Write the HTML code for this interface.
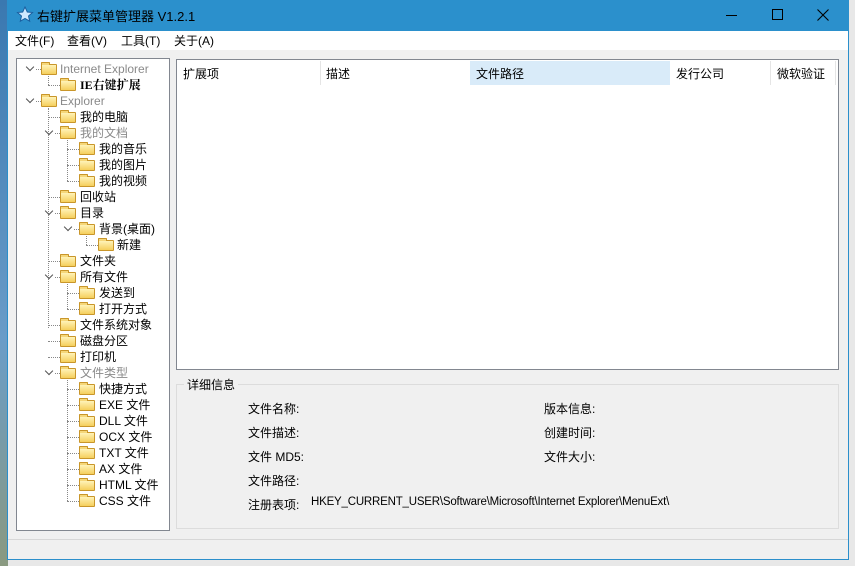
<!DOCTYPE html>
<html><head><meta charset="utf-8"><style>
*{margin:0;padding:0;box-sizing:border-box}
body{width:855px;height:566px;overflow:hidden;background:#e8e8e8;font-family:"Liberation Sans","Noto Sans CJK SC",sans-serif;font-size:12px;color:#000;position:relative}
.a{position:absolute;white-space:nowrap}
.desk{left:0;top:0;width:8px;height:566px;background:linear-gradient(#3a78b0,#6a9cc8 60%,#8a9a80)}
.win{left:7px;top:0;width:842px;height:560px;background:#f0f0f0;border:1px solid #2b8fcb;border-top:0}
.title{left:7px;top:0;width:842px;height:31px;background:#2b90cc;color:#000;font-size:13px}
.menu{left:8px;top:31px;width:840px;height:19px;background:#fff}
.box{background:#fff;border:1px solid #828790}
.f{position:absolute;width:16px;height:11px;margin-top:1px;background:linear-gradient(#fff3b8,#f5cf5c);border:1px solid #c9962a;border-radius:1px}
.f:before{content:"";position:absolute;left:-1px;top:-3px;width:7px;height:2px;background:#f5d77a;border:1px solid #c9962a;border-bottom:0;border-radius:1px 1px 0 0}
.t{position:absolute;font-size:12px;line-height:16px}
.g{color:#8a8a8a}
.ch{position:absolute;width:6px;height:6px;border-right:1.5px solid #555;border-bottom:1.5px solid #555;transform:rotate(45deg)}
.d{position:absolute;border-top:1px dotted #888;height:0}
.v{position:absolute;border-left:1px dotted #888;width:0}
.hd{position:absolute;top:62px;height:25px;line-height:25px;font-size:12px}
.lb{position:absolute;font-size:12px}
</style></head><body>
<div class="a desk"></div>
<div class="a win"></div>
<div class="a title">
 <svg class="a" style="left:9px;top:6px" width="18" height="18" viewBox="0 0 18 18"><path d="M9 1l2.3 5 5.2.5-4 3.5 1.2 5.2L9 12.5 4.3 15.2 5.5 10l-4-3.5 5.2-.5z" fill="#cfe8ff" stroke="#1a5fa0" stroke-width="1"/></svg>
 <span class="a" style="left:30px;top:6px">右键扩展菜单管理器 V1.2.1</span>
 <div class="a" style="left:719px;top:15px;width:11px;border-top:1px solid #000"></div>
 <div class="a" style="left:765px;top:9px;width:11px;height:11px;border:1px solid #000"></div>
 <svg class="a" style="left:810px;top:9px" width="12" height="12"><path d="M0.5 0.5L11.5 11.5M11.5 0.5L0.5 11.5" stroke="#000" stroke-width="1.1"/></svg>
</div>
<div class="a menu"><span class="a" style="left:7px;top:1px">文件(F)</span><span class="a" style="left:59px;top:1px">查看(V)</span><span class="a" style="left:113px;top:1px">工具(T)</span><span class="a" style="left:166px;top:1px">关于(A)</span></div>

<div class="a box" style="left:16px;top:58px;width:154px;height:473px">
<div style="position:relative;left:-17px;top:-59px">
 <div class="ch" style="left:27px;top:64px"></div><div class="d" style="left:36px;top:69px;width:5px"></div><div class="f" style="left:41px;top:63px"></div><div class="t g" style="left:60px;top:61px">Internet Explorer</div>
 <div class="v" style="left:48px;top:76px;height:9px"></div><div class="d" style="left:48px;top:85px;width:12px"></div><div class="f" style="left:60px;top:79px"></div><div class="t" style="left:80px;top:77px;font-weight:bold;font-family:'Liberation Serif','Noto Serif CJK SC',serif">IE右键扩展</div>
 <div class="ch" style="left:27px;top:96px"></div><div class="d" style="left:36px;top:101px;width:5px"></div><div class="f" style="left:41px;top:95px"></div><div class="t g" style="left:60px;top:93px">Explorer</div>
 <div class="v" style="left:48px;top:108px;height:220px"></div>
 <div class="d" style="left:48px;top:117px;width:12px"></div><div class="f" style="left:60px;top:111px"></div><div class="t" style="left:80px;top:109px">我的电脑</div>
 <div class="ch" style="left:46px;top:128px"></div><div class="d" style="left:55px;top:133px;width:5px"></div><div class="f" style="left:60px;top:127px"></div><div class="t g" style="left:80px;top:125px">我的文档</div>
 <div class="v" style="left:67px;top:140px;height:41px"></div>
 <div class="d" style="left:67px;top:149px;width:12px"></div><div class="f" style="left:79px;top:143px"></div><div class="t" style="left:99px;top:141px">我的音乐</div>
 <div class="d" style="left:67px;top:165px;width:12px"></div><div class="f" style="left:79px;top:159px"></div><div class="t" style="left:99px;top:157px">我的图片</div>
 <div class="d" style="left:67px;top:181px;width:12px"></div><div class="f" style="left:79px;top:175px"></div><div class="t" style="left:99px;top:173px">我的视频</div>
 <div class="d" style="left:48px;top:197px;width:12px"></div><div class="f" style="left:60px;top:191px"></div><div class="t" style="left:80px;top:189px">回收站</div>
 <div class="ch" style="left:46px;top:208px"></div><div class="d" style="left:55px;top:213px;width:5px"></div><div class="f" style="left:60px;top:207px"></div><div class="t" style="left:80px;top:205px">目录</div>
 <div class="ch" style="left:65px;top:224px"></div><div class="d" style="left:74px;top:229px;width:5px"></div><div class="f" style="left:79px;top:223px"></div><div class="t" style="left:99px;top:221px">背景(桌面)</div>
 <div class="v" style="left:86px;top:236px;height:9px"></div><div class="d" style="left:86px;top:245px;width:12px"></div><div class="f" style="left:98px;top:239px"></div><div class="t" style="left:117px;top:237px">新建</div>
 <div class="d" style="left:48px;top:261px;width:12px"></div><div class="f" style="left:60px;top:255px"></div><div class="t" style="left:80px;top:253px">文件夹</div>
 <div class="ch" style="left:46px;top:272px"></div><div class="d" style="left:55px;top:277px;width:5px"></div><div class="f" style="left:60px;top:271px"></div><div class="t" style="left:80px;top:269px">所有文件</div>
 <div class="v" style="left:67px;top:284px;height:25px"></div>
 <div class="d" style="left:67px;top:293px;width:12px"></div><div class="f" style="left:79px;top:287px"></div><div class="t" style="left:99px;top:285px">发送到</div>
 <div class="d" style="left:67px;top:309px;width:12px"></div><div class="f" style="left:79px;top:303px"></div><div class="t" style="left:99px;top:301px">打开方式</div>
 <div class="d" style="left:48px;top:325px;width:12px"></div><div class="f" style="left:60px;top:319px"></div><div class="t" style="left:80px;top:317px">文件系统对象</div>
 <div class="d" style="left:48px;top:341px;width:12px"></div><div class="f" style="left:60px;top:335px"></div><div class="t" style="left:80px;top:333px">磁盘分区</div>
 <div class="d" style="left:48px;top:357px;width:12px"></div><div class="f" style="left:60px;top:351px"></div><div class="t" style="left:80px;top:349px">打印机</div>
 <div class="ch" style="left:46px;top:368px"></div><div class="d" style="left:55px;top:373px;width:5px"></div><div class="f" style="left:60px;top:367px"></div><div class="t g" style="left:80px;top:365px">文件类型</div>
 <div class="v" style="left:67px;top:380px;height:121px"></div>
 <div class="d" style="left:67px;top:389px;width:12px"></div><div class="f" style="left:79px;top:383px"></div><div class="t" style="left:99px;top:381px">快捷方式</div>
 <div class="d" style="left:67px;top:405px;width:12px"></div><div class="f" style="left:79px;top:399px"></div><div class="t" style="left:99px;top:397px">EXE 文件</div>
 <div class="d" style="left:67px;top:421px;width:12px"></div><div class="f" style="left:79px;top:415px"></div><div class="t" style="left:99px;top:413px">DLL 文件</div>
 <div class="d" style="left:67px;top:437px;width:12px"></div><div class="f" style="left:79px;top:431px"></div><div class="t" style="left:99px;top:429px">OCX 文件</div>
 <div class="d" style="left:67px;top:453px;width:12px"></div><div class="f" style="left:79px;top:447px"></div><div class="t" style="left:99px;top:445px">TXT 文件</div>
 <div class="d" style="left:67px;top:469px;width:12px"></div><div class="f" style="left:79px;top:463px"></div><div class="t" style="left:99px;top:461px">AX 文件</div>
 <div class="d" style="left:67px;top:485px;width:12px"></div><div class="f" style="left:79px;top:479px"></div><div class="t" style="left:99px;top:477px">HTML 文件</div>
 <div class="d" style="left:67px;top:501px;width:12px"></div><div class="f" style="left:79px;top:495px"></div><div class="t" style="left:99px;top:493px">CSS 文件</div>
</div></div>

<div class="a box" style="left:176px;top:59px;width:663px;height:311px"></div>
<div class="a" style="left:470px;top:61px;width:200px;height:24px;background:#d9ebf9"></div>
<div class="a" style="left:320px;top:61px;width:1px;height:24px;background:#e5e5e5"></div>
<div class="a" style="left:770px;top:61px;width:1px;height:24px;background:#e5e5e5"></div>
<div class="a" style="left:835px;top:61px;width:1px;height:24px;background:#e5e5e5"></div>
<span class="hd" style="left:183px">扩展项</span><span class="hd" style="left:326px">描述</span><span class="hd" style="left:476px">文件路径</span><span class="hd" style="left:676px">发行公司</span><span class="hd" style="left:777px">微软验证</span>

<div class="a" style="left:176px;top:384px;width:663px;height:145px;border:1px solid #dcdcdc"></div>
<span class="a" style="left:184px;top:376px;background:#f0f0f0;padding:0 3px;font-size:12px">详细信息</span>
<span class="lb a" style="left:248px;top:400px">文件名称:</span>
<span class="lb a" style="left:248px;top:424px">文件描述:</span>
<span class="lb a" style="left:248px;top:448px">文件 MD5:</span>
<span class="lb a" style="left:248px;top:472px">文件路径:</span>
<span class="lb a" style="left:248px;top:496px">注册表项:</span>
<span class="lb a" style="left:311px;top:496px;font-size:11.5px;letter-spacing:-0.2px">HKEY_CURRENT_USER\Software\Microsoft\Internet Explorer\MenuExt\</span>
<span class="lb a" style="left:544px;top:400px">版本信息:</span>
<span class="lb a" style="left:544px;top:424px">创建时间:</span>
<span class="lb a" style="left:544px;top:448px">文件大小:</span>
<div class="a" style="left:8px;top:539px;width:840px;height:1px;background:#d7d7d7"></div>
</body></html>
